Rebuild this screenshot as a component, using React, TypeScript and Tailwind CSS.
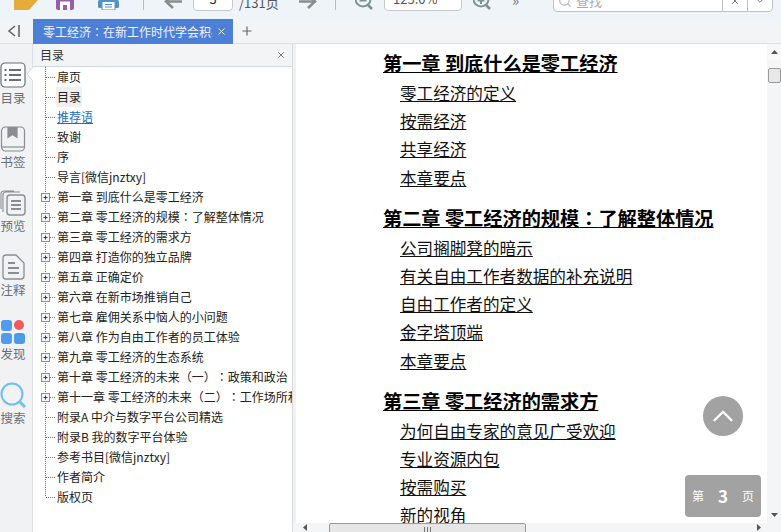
import React from "react";
import { ChevronDown, X, Plus, Search, ChevronUp } from "lucide-react";

const tree: [string, boolean?][] = [
  ["扉页"], ["目录"], ["推荐语"], ["致谢"], ["序"], ["导言[微信jnztxy]"],
  ["第一章 到底什么是零工经济", true], ["第二章 零工经济的规模：了解整体情况", true], ["第三章 零工经济的需求方", true],
  ["第四章 打造你的独立品牌", true], ["第五章 正确定价", true], ["第六章 在新市场推销自己", true],
  ["第七章 雇佣关系中恼人的小问题", true], ["第八章 作为自由工作者的员工体验", true], ["第九章 零工经济的生态系统", true],
  ["第十章 零工经济的未来（一）：政策和政治", true], ["第十一章 零工经济的未来（二）：工作场所和社会", true],
  ["附录A 中介与数字平台公司精选"], ["附录B 我的数字平台体验"], ["参考书目[微信jnztxy]"], ["作者简介"], ["版权页"],
];

const content: { h: string; items: string[] }[] = [
  { h: "第一章 到底什么是零工经济", items: ["零工经济的定义", "按需经济", "共享经济", "本章要点"] },
  { h: "第二章 零工经济的规模：了解整体情况", items: ["公司搁脚凳的暗示", "有关自由工作者数据的补充说明", "自由工作者的定义", "金字塔顶端", "本章要点"] },
  { h: "第三章 零工经济的需求方", items: ["为何自由专家的意见广受欢迎", "专业资源内包", "按需购买", "新的视角"] },
];

/* The reference centres the full-width colon in its cell, as the TC face does. */
function Label({ text }: { text: string }) {
  const parts = text.split("：");
  return (
    <>
      {parts.map((p, i) => (
        <React.Fragment key={i}>
          {i > 0 && <span className="font-['Noto_Sans_CJK_TC']">：</span>}
          {p}
        </React.Fragment>
      ))}
    </>
  );
}

function Connector({ plus, last }: { plus?: boolean; last?: boolean }) {
  return (
    <svg width="24" height="20" className="shrink-0">
      <line x1="12.5" y1="0" x2="12.5" y2={last ? 10 : 20} stroke="#777" strokeDasharray="1 1" />
      <line x1="13" y1="10.5" x2="23" y2="10.5" stroke="#777" strokeDasharray="1 1" />
      {plus && (
        <g>
          <rect x="8.5" y="6.5" width="8" height="8" fill="#f4f5fa" stroke="#8a8fa6" />
          <path d="M10.5 10.5h4M12.5 8.5v4" stroke="#2b3a67" />
        </g>
      )}
    </svg>
  );
}

function RailItem({ label, children }: { label: string; children: React.ReactNode }) {
  return (
    <div className="h-16 w-[26px] flex flex-col items-center">
      <div className="h-[26px] w-[26px] flex items-center justify-center">{children}</div>
      <div className="mt-[3px] text-[12.5px] leading-[14px] text-[#6b6f74] whitespace-nowrap">{label}</div>
    </div>
  );
}

function Magnifier({ plus }: { plus?: boolean }) {
  return (
    <svg width="18" height="11" fill="none" stroke="#7f9294" strokeWidth="2" className="ml-[19px] mb-[8px] shrink-0">
      <circle cx="8" cy="-1" r="7.5" />
      <path d="M13 5l4 4" strokeWidth="2.6" />
      <path d="M4.5 0.5h7" />
      {plus && <path d="M8 0v4" />}
    </svg>
  );
}

export default function App() {
  return (
    <div className="w-[781px] h-[532px] overflow-hidden flex flex-col bg-[#f2f4f6] text-black relative" style={{ fontFamily: '"Noto Sans CJK SC", "Noto Sans", sans-serif' }}>
      {/* Toolbar, cropped at the top */}
      <div className="h-[19px] shrink-0 flex items-end bg-[#eff4f9] overflow-hidden text-[#666]">
        <svg width="24" height="10" className="ml-[14px] mb-[9px] shrink-0"><path d="M0 0H24L15 10H1a1 1 0 0 1-1-1Z" fill="#e6ac3a" /></svg>
        <svg width="18" height="10" className="ml-[18px] mb-[9px] shrink-0"><path d="M0 0H18V8a2 2 0 0 1-2 2H2a2 2 0 0 1-2-2Z" fill="#965fae" /><path d="M4 1.5H14V10H11V5H7V10H4Z" fill="#fff" /><rect x="7" y="5" width="4" height="5" fill="#965fae" /></svg>
        <svg width="21" height="10" className="ml-[24px] mb-[9px] shrink-0"><rect x="0" y="0" width="21" height="8" rx="1.5" fill="#4e93c9" /><rect x="4" y="1.5" width="13" height="8.5" fill="#fff" stroke="#4e93c9" /><path d="M7 4.5h7M7 7h7" stroke="#4e93c9" /></svg>
        <div className="ml-[24px] mb-[9px] w-px h-[10px] bg-[#b9bdc1] shrink-0" />
        <svg width="18" height="9" className="ml-[20px] mb-[10px] shrink-0" fill="none" stroke="#8c8c8c" strokeWidth="2.6"><path d="M18 1.5H3M9 -6 2 1.5 9 8" /></svg>
        <div className="ml-[11px] mb-[8px] w-[40px] h-[24px] shrink-0 bg-white border border-[#c5c9cd] rounded-[4px] flex items-end justify-center pb-[4px] text-[13px] leading-[14px] text-[#333]">3</div>
        <div className="ml-[6px] mb-[7px] w-[46px] shrink-0 text-[13px] leading-[18px] text-[#555]">/131页</div>
        <svg width="18" height="9" className="ml-[14px] mb-[10px] shrink-0" fill="none" stroke="#8c8c8c" strokeWidth="2.6"><path d="M0 1.5H15M9 -6l7 7.5L9 8" /></svg>
        <div className="ml-[18px] mb-[9px] w-px h-[10px] bg-[#b9bdc1] shrink-0" />
        <Magnifier />
        <div className="ml-[11px] mb-[8px] w-[78px] h-[24px] shrink-0 bg-white border border-[#c5c9cd] rounded-[4px] flex items-end justify-between pl-[8px] pr-[4px] pb-[4px] text-[13px] leading-[14px] text-[#555]">125.0%<ChevronDown size={13} className="mb-[2px] text-[#888]" /></div>
        <div className="-ml-[8px] shrink-0"><Magnifier plus /></div>
        <div className="ml-[21px] mb-[12px] w-[10px] shrink-0 text-[15px] leading-[14px] text-[#777]">»</div>
        <div className="ml-[31px] mb-[7px] w-[220px] h-[24px] shrink-0 bg-white border border-[#bfc3c7] rounded-[4px] flex items-stretch text-[13px] text-[#aaa]">
          <Search size={14} className="ml-[4px] mr-[4px] self-end mb-[3px] text-[#bbb]" />
          <span className="flex-1 self-end leading-[14px] mb-[3px]">查找</span>
          <div className="w-[25px] border-l border-[#bfc3c7] flex items-end justify-center pb-[5px]"><X size={10} className="text-[#666]" /></div>
          <div className="w-[25px] border-l border-[#bfc3c7] flex items-end justify-center pb-[5px]"><ChevronDown size={10} className="text-[#666]" /></div>
        </div>
      </div>

      {/* Tab strip */}
      <div className="h-[25px] shrink-0 flex items-stretch bg-[#f2f4f6] border-b border-[#dcdfe3]">
        <div className="w-[33px] flex items-center justify-center pr-[6px]">
          <svg width="14" height="12" fill="none" stroke="#666" strokeWidth="1.6"><path d="M8 1 2 6l6 5M12 0v12" /></svg>
        </div>
        <div className="w-[200px] -mb-px relative bg-[#4b80d6] text-white text-[12px] flex items-center pl-[10px] pr-[6px]">
          <span className="flex-1 overflow-hidden whitespace-nowrap text-[#f0f4ff]"><Label text="零工经济：在新工作时代学会积极进取" /></span>
          <X size={11} className="ml-[4px] shrink-0" />
        </div>
        <div className="w-[28px] flex items-center justify-center"><Plus size={14} strokeWidth={2} className="text-[#666]" /></div>
      </div>

      <div className="flex-1 flex min-h-0">
        {/* Rail */}
        <div className="w-[33px] shrink-0 pt-[18px] bg-[#f0f2f4] border-r border-[#dcdfe3] relative">
          <RailItem label="目录">
            <svg width="26" height="26" fill="none" stroke="#6b6f74" strokeWidth="1.2"><rect x="1" y="1" width="24" height="24" rx="4" fill="#fff" /><path d="M9 8h12M9 13h12M9 18h12M4.5 8h2M4.5 13h2M4.5 18h2" strokeWidth="2" /></svg>
          </RailItem>
          <RailItem label="书签">
            <svg width="26" height="26" fill="none" stroke="#8a8e92" strokeWidth="1.2"><rect x="1.5" y="1" width="23" height="24" rx="4" /><path d="M8 1.5h9v10l-4.5-3-4.5 3z" fill="#8a8e92" /><path d="M2 21h22" /></svg>
          </RailItem>
          <RailItem label="预览">
            <svg width="26" height="26" fill="none" stroke="#8a8e92" strokeWidth="1.1"><path d="M3 22V5a3 3 0 0 1 3-3h14M1 19V4a3 3 0 0 1 3-3h10" /><rect x="7" y="5" width="18" height="20" rx="3" strokeWidth="1.4" /><path d="M11 11h10M11 15h10M11 19h10" strokeWidth="1.8" /></svg>
          </RailItem>
          <RailItem label="注释">
            <svg width="26" height="26" fill="none" stroke="#8a8e92" strokeWidth="1.3"><path d="M6 1h10l8 8v13a3 3 0 0 1-3 3H6a3 3 0 0 1-3-3V4a3 3 0 0 1 3-3z" /><path d="M8 9h7M8 14h11M8 19h11" strokeWidth="1.8" /></svg>
          </RailItem>
          <RailItem label="发现">
            <svg width="26" height="26"><rect x="1" y="2" width="11" height="11" rx="3" fill="#4e9bf0" /><circle cx="19" cy="7" r="5" fill="#f05a5a" /><rect x="1" y="15" width="11" height="11" rx="3" fill="#4e9bf0" /><rect x="14" y="15" width="11" height="11" rx="3" fill="#4a9ce8" /></svg>
          </RailItem>
          <RailItem label="搜索">
            <svg width="26" height="26" fill="none" stroke="#6fc0ef" strokeWidth="2"><circle cx="12" cy="12" r="10.5" /><path d="M20 20l5 5" strokeWidth="3" /></svg>
          </RailItem>
          <svg width="7" height="14" className="absolute right-[-1px] top-[23px]"><path d="M7 0 1 7l6 7z" fill="#fff" /><path d="M7 0 1 7l6 7" fill="none" stroke="#d5d8dc" /></svg>
        </div>

        {/* Contents panel */}
        <div className="w-[260px] shrink-0 flex flex-col bg-white border-r border-[#d8dbdf]">
          <div className="h-[23px] shrink-0 flex items-center justify-between pl-[7px] pr-[6px] bg-[#f2f4f6] border-b border-[#d5d8dc] text-[12px] text-[#333]">
            目录<X size={10} className="text-[#666]" />
          </div>
          <div className="text-[12px] leading-[20px] text-[#222] overflow-hidden flex-1 [text-spacing-trim:space-all]">
            {tree.map(([t, plus], i) => (
              <div key={i} className="h-5 flex items-center whitespace-nowrap">
                <Connector plus={plus} last={i === tree.length - 1} />
                <span className={i === 1 ? "bg-[#f0f0f0] px-[1px] -mx-[1px]" : i === 2 ? "text-[#1a6fc4] underline" : ""}><Label text={t} /></span>
              </div>
            ))}
          </div>
        </div>

        {/* Reader */}
        <div className="flex-1 min-w-0 flex flex-col relative">
          <div className="flex-1 min-h-0 flex">
            <div className="w-[3px] shrink-0 bg-[#f0f1f2]" />
            <div className="flex-1 min-w-0 bg-white overflow-hidden pl-[87px] pt-[5px]">
              {content.map((sec) => (
                <div key={sec.h} className="mb-[12px]">
                  <div className="text-[19.2px] leading-[28px] font-bold underline whitespace-nowrap"><Label text={sec.h} /></div>
                  <div className="mt-[2px]">
                    {sec.items.map((it) => (
                      <div key={it} className="ml-[17px] text-[16.6px] leading-[28.2px] underline whitespace-nowrap text-[#111]">{it}</div>
                    ))}
                  </div>
                </div>
              ))}
            </div>
            {/* vertical scrollbar */}
            <div className="w-[14px] shrink-0 bg-[#f4f5f6] flex flex-col items-center">
              <div className="h-[16px] w-full flex items-center justify-center bg-[#f8f8f8]"><svg width="7" height="4"><path d="M0 4 3.5 0 7 4z" fill="#555" /></svg></div>
              <div className="mt-[8px] h-[15px] w-[13px] border border-[#999] rounded-[2px] bg-[#e8e8e8]" />
              <div className="flex-1" />
              <div className="h-[16px] w-full flex items-center justify-center"><svg width="7" height="4"><path d="M0 0h7L3.5 4z" fill="#555" /></svg></div>
            </div>
          </div>
          {/* horizontal scrollbar */}
          <div className="h-[9px] shrink-0 bg-[#f4f5f6] flex items-start overflow-hidden">
            <svg width="4" height="7" className="ml-[10px] mt-[1px]"><path d="M4 0v7L0 3.5z" fill="#555" /></svg>
            <div className="ml-[22px] w-[197px] h-[14px] border border-[#999] rounded-[2px] bg-[#e6e6e6] flex justify-center pt-[3px]">
              <div className="w-[7px] h-[6px] border-x border-[#777] relative"><div className="mx-auto w-px h-full bg-[#777]" /></div>
            </div>
            <div className="flex-1" />
            <svg width="4" height="7" className="mr-[20px] mt-[1px]"><path d="M0 0v7l4-3.5z" fill="#555" /></svg>
          </div>

          {/* Floating controls */}
          <div className="absolute left-[410px] top-[352px] w-[40px] h-[40px] rounded-full bg-[#a2a2a2] flex items-center justify-center">
            <ChevronUp size={34} strokeWidth={1.6} className="text-white" />
          </div>
          <div className="absolute left-[392px] top-[431px] w-[76px] h-[42px] rounded-[4px] bg-[#a2a2a2] flex items-center justify-between px-[7px] text-white text-[12px]">
            <span>第</span>
            <span className="text-[17px] font-bold">3</span>
            <span>页</span>
          </div>
        </div>
      </div>
    </div>
  );
}
